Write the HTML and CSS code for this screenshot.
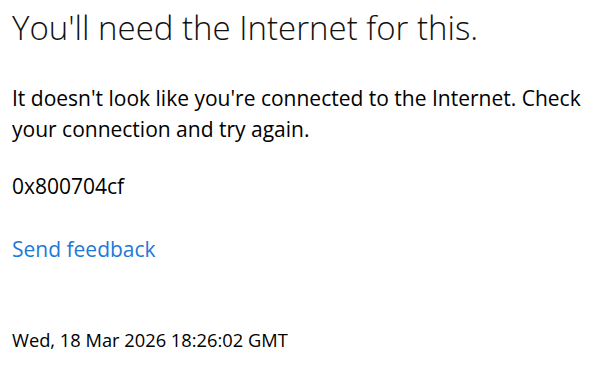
FILE: index.html
```html
<!DOCTYPE html>
<html lang="en">
<head>
<meta charset="utf-8">
<title>You'll need the Internet for this.</title>
<link rel="stylesheet" href="styles.css">
</head>
<body>
<main class="page">
  <h1 class="title">You'll need the Internet for this.</h1>
  <p class="message">It doesn't look like you're connected to the Internet. Check your connection and try again.</p>
  <p class="code">0x800704cf</p>
  <p class="feedback"><a href="#" class="link">Send feedback</a></p>
  <p class="stamp">Wed, 18 Mar 2026 18:26:02 GMT</p>
</main>
</body>
</html>
```
FILE: styles.css
```css
html, body {
  margin: 0;
  padding: 0;
  background: #ffffff;
}
.page {
  padding: 8px 0 0 12px;
  font-family: "Open Sans", "Noto Sans", sans-serif;
  color: #000000;
}
.title {
  margin: 0;
  font-size: 33px;
  font-weight: 300;
  line-height: 40px;
  color: #111111;
}
.message {
  margin: 35px 0 0 0;
  font-size: 21px;
  line-height: 31px;
}
.code {
  margin: 26px 0 0 0;
  font-size: 21px;
  line-height: 31px;
}
.feedback {
  margin: 32px 0 0 0;
  font-size: 21px;
  line-height: 31px;
}
.link {
  color: #1e78d7;
  text-decoration: none;
}
.stamp {
  margin: 63px 0 0 0;
  font-size: 18.3px;
  line-height: 24px;
}
```
